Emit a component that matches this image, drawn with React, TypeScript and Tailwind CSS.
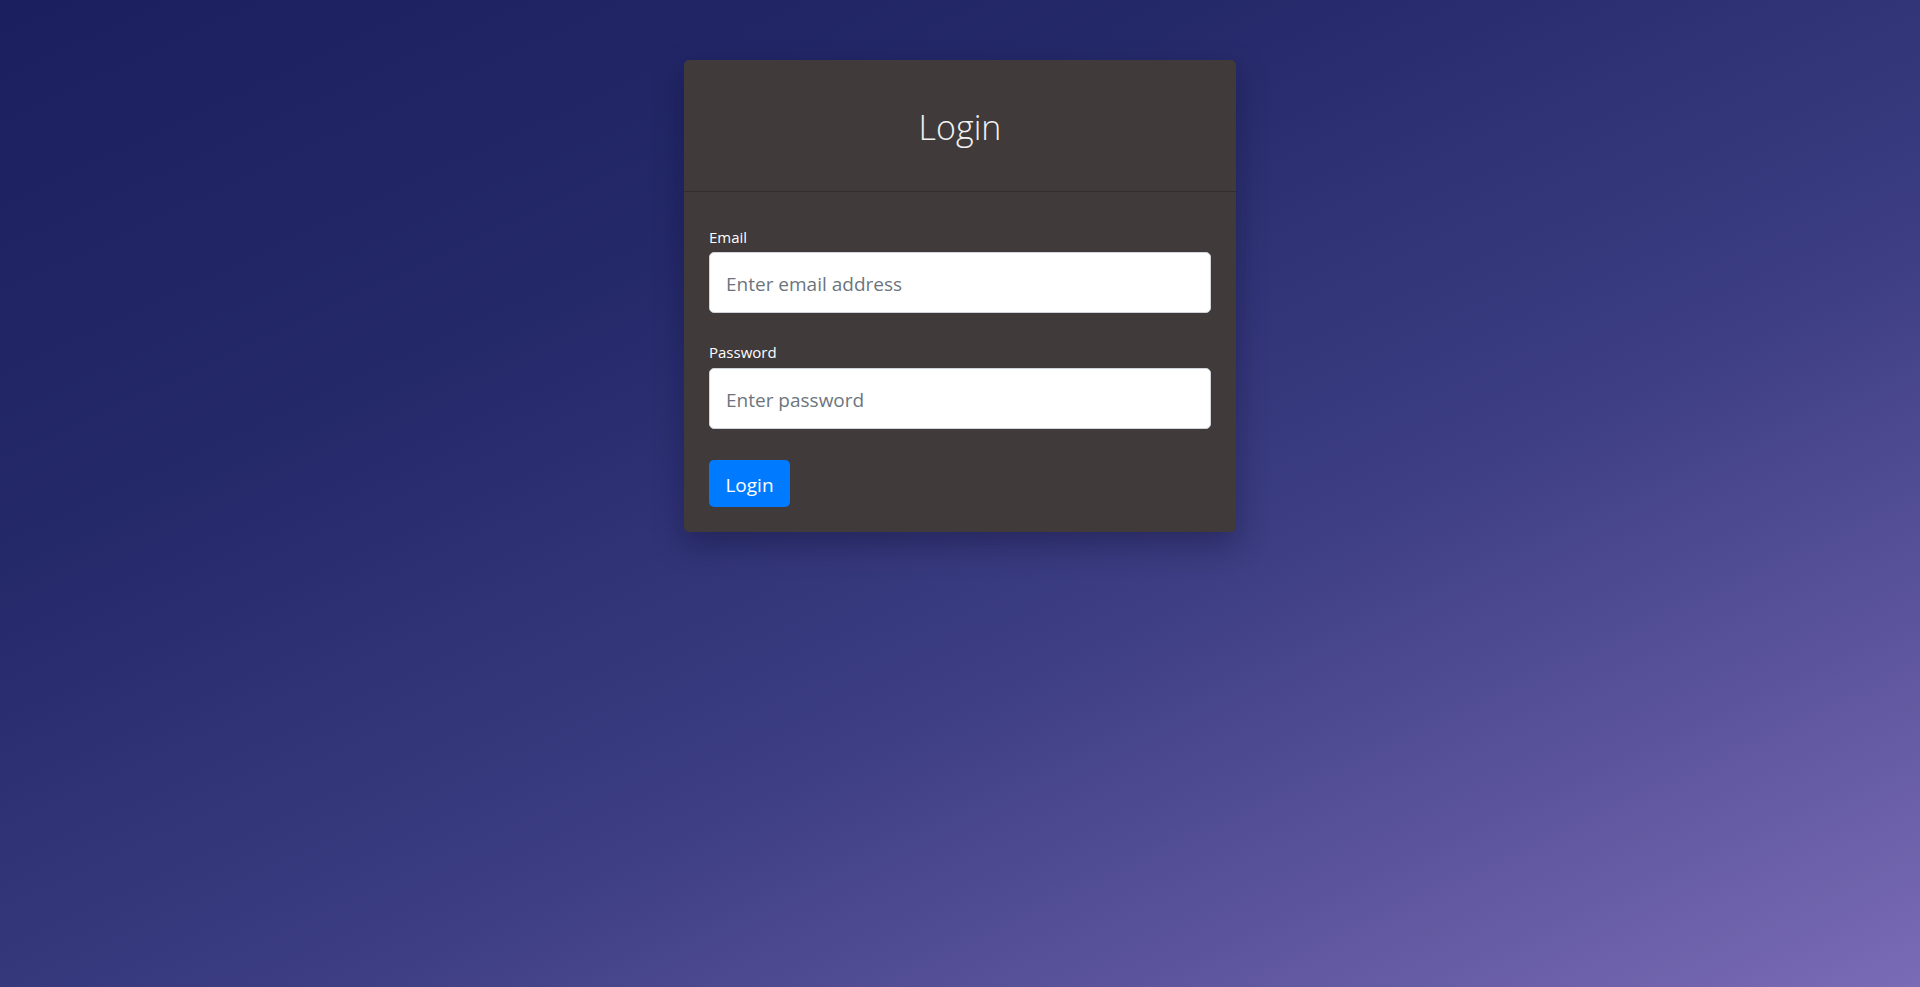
import { useState } from 'react';

export default function App() {
  const [email, setEmail] = useState('');
  const [password, setPassword] = useState('');

  return (
    <div
      className="min-h-screen w-full bg-[linear-gradient(155deg,#1b1f5f_0%,#24296a_30%,#3c3d82_60%,#7a6bb5_100%)] pt-[60px]"
      style={{ fontFamily: '"Open Sans", "Noto Sans", sans-serif' }}
    >
      <div className="mx-auto w-[552px] rounded-[5px] bg-[#403a3a] shadow-[0_12px_30px_rgba(10,10,40,0.35)]">
        {/* Header */}
        <div className="flex h-[132px] items-center justify-center border-b border-[#332e2e]">
          <h1 className="pt-[3px] text-[34px] font-light leading-none text-[#f2f2f2]">Login</h1>
        </div>

        {/* Form */}
        <form className="px-[25px] pt-[34px] pb-[25px]" onSubmit={(e) => e.preventDefault()}>
          <label className="mb-[4px] block h-[22px] text-[15px] leading-[22px] text-white">Email</label>
          <input
            type="email"
            placeholder="Enter email address"
            value={email}
            onChange={(e) => setEmail(e.target.value)}
            className="block h-[61px] w-full rounded-[5px] border border-[#ced4da] bg-white px-[16px] pt-[2px] text-[19px] text-[#495057] outline-none placeholder:text-[#6c757d]"
          />

          <label className="mt-[28px] mb-[5px] block h-[22px] text-[15px] leading-[22px] text-white">Password</label>
          <input
            type="password"
            placeholder="Enter password"
            value={password}
            onChange={(e) => setPassword(e.target.value)}
            className="block h-[61px] w-full rounded-[5px] border border-[#ced4da] bg-white px-[16px] pt-[2px] text-[19px] text-[#495057] outline-none placeholder:text-[#6c757d]"
          />

          <button
            type="submit"
            className="mt-[31px] block h-[47px] w-[81px] rounded-[5px] bg-[#007bff] pt-[3px] text-[19px] text-white hover:bg-[#0069d9]"
          >
            Login
          </button>
        </form>
      </div>
    </div>
  );
}
